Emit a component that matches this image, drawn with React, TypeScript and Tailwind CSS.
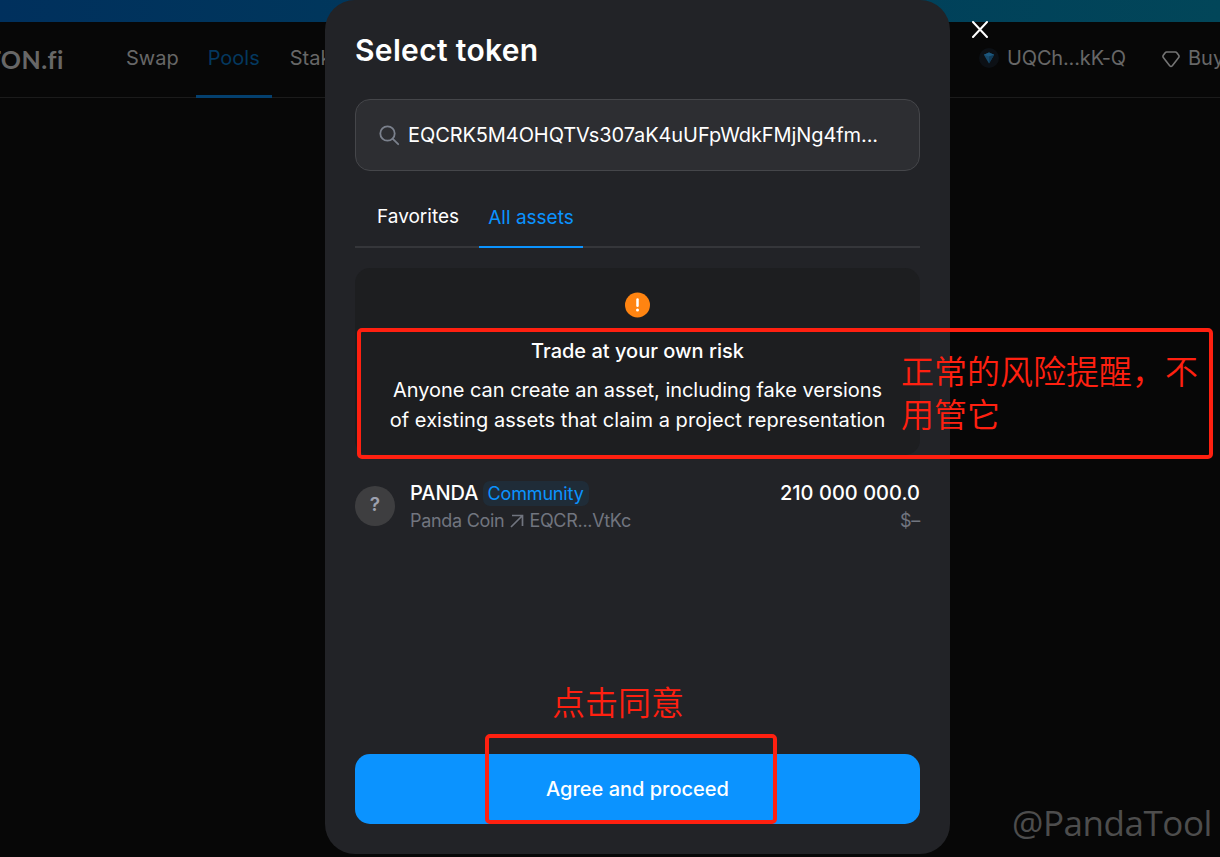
import React from "react";

function SearchIcon() {
  return (
    <svg width="22" height="22" viewBox="0 0 22 22" fill="none" stroke="#7b818d" strokeWidth="1.8" strokeLinecap="round">
      <circle cx="8.5" cy="9.5" r="7.2" />
      <path d="M13.8 14.8L19.2 20.2" />
    </svg>
  );
}

function TokenLogo() {
  return (
    <svg className="mt-px shrink-0" width="20" height="20" viewBox="0 0 20 20">
      <circle cx="10" cy="10" r="10" fill="#0c1015" />
      <path d="M4.800 6.800L10 4.400l5.200 2.400L10 15.600z" fill="#184a6c" />
      <path d="M4.800 6.800L10 4.400l5.200 2.400L10 8.600z" fill="#1d587e" />
      <path d="M10 8.600v7l5.200-8.800z" fill="#123c59" />
    </svg>
  );
}

function GemIcon() {
  return (
    <svg className="mt-[3px] shrink-0" width="18" height="17" viewBox="0 0 18 17" fill="none" stroke="#747474" strokeWidth="1.6" strokeLinejoin="round">
      <path d="M4.600 1h8.800q.9 0 1.400.7L16.700 4.300q.6.900.2 1.800-.2.500-.6.900L10.300 14.800q-1.300 1.300-2.600 0L1.700 7q-.4-.4-.6-.9-.4-.9.2-1.800L3.200 1.700Q3.700 1 4.600 1z" />
    </svg>
  );
}

function NavBar() {
  return (
    <header className="flex h-[76px] w-[1300px] border-b border-[#1b1b1b] text-[20px] leading-[72px] whitespace-nowrap text-[#676767]">
      <div className="-ml-[14px] w-[128px] shrink-0 font-[Lato] text-[25px] leading-[74px] font-bold tracking-[0.45px] [font-variant-ligatures:none]">TON.fi</div>
      <nav className="flex w-[865px] shrink-0">
        <a className="h-[76px] px-[12px]">Swap</a>
        <a className="ml-[5px] h-[76px] w-[76px] border-b-[3px] border-[#04406f] text-center text-[#04385f]">Pools</a>
        <a className="ml-[6px] h-[76px] px-[12px]">Stake</a>
      </nav>
      <div className="flex w-[183px] shrink-0 items-center gap-[8px] pb-[4px]">
        <TokenLogo />
        <span className="tracking-[-0.15px]">UQCh...kK-Q</span>
      </div>
      <div className="flex items-center gap-[8px] pb-[4px]">
        <GemIcon />
        <span>Buy</span>
      </div>
    </header>
  );
}

function SelectTokenModal() {
  return (
    <section className="flex h-[854px] w-[625px] flex-col rounded-[30px] bg-[#222327] px-[30px] pb-[30px] text-white">
      <h1 className="pt-[32px] text-[30px] leading-[36px] font-semibold tracking-[0.33px]">Select token</h1>
      <div className="mt-[31px] flex h-[72px] items-center rounded-[15px] border border-[#45464a] bg-[#2d2e32] pl-[23px] text-[20px]">
        <SearchIcon />
        <span className="ml-[7px] tracking-[-0.09px]">EQCRK5M4OHQTVs307aK4uUFpWdkFMjNg4fm...</span>
      </div>
      <div className="mt-[16px] flex h-[61px] border-b-2 border-[#35363a] text-[19px] leading-[60px]">
        <div className="w-[124px] pl-[22px]">Favorites</div>
        <div className="h-[61px] w-[104px] border-b-2 border-[#0b93ff] text-center leading-[61px] text-[#0b93ff]">All assets</div>
      </div>
      <div className="mt-[20px] flex h-[187px] flex-col items-center rounded-[15px] bg-[#1d1e20] pt-[24px] text-center text-[20px] leading-[30px]">
        <svg width="25" height="26" viewBox="0 0 25 26">
          <circle cx="12.5" cy="13" r="12.5" fill="#ff8411" />
          <path d="M12.5 7.500v6.300" stroke="#fff" strokeWidth="2.5" strokeLinecap="round" />
          <circle cx="12.5" cy="18" r="1.5" fill="#fff" />
        </svg>
        <h2 className="mt-[18px] font-medium">Trade at your own risk</h2>
        <p className="mt-[9px] whitespace-nowrap">
          <span className="tracking-[-0.04px]">Anyone can create an asset, including fake versions</span>
          <br />
          <span className="tracking-[0.05px]">of existing assets that claim a project representation</span>
        </p>
      </div>
      <div className="mt-[24px] flex h-[54px] items-center">
        <div className="mb-px flex size-[40px] items-center justify-center rounded-full bg-[#3e3e40] text-[19px] font-semibold text-[#9ea2b0]">?</div>
        <div className="ml-[15px] flex-1">
          <div className="mt-px flex h-[28px] items-center gap-[5px]">
            <span className="text-[20px] font-medium">PANDA</span>
            <span className="-ml-px flex h-[25px] items-center rounded-[7px] bg-[#1f2c38] px-[5px] text-[18px] tracking-[-0.15px] text-[#0b93ff]">Community</span>
          </div>
          <div className="flex h-[27px] items-center text-[18px] tracking-[-0.3px] text-[#71757f]">
            <span>Panda Coin</span>
            <svg className="mr-[5px] ml-[6px]" width="14" height="14" viewBox="0 0 14 14" fill="none" stroke="currentColor" strokeWidth="1.7">
              <path d="M2 1.5h10.500V12M12.500 1.5L1 13" />
            </svg>
            <span>EQCR...VtKc</span>
          </div>
        </div>
        <div className="text-right">
          <div className="mt-px text-[20px] leading-[28px] font-medium tracking-[0.04px]">210 000 000.0</div>
          <div className="text-[18px] leading-[28px] tracking-[-0.3px] text-[#71757f]">$–</div>
        </div>
      </div>
      <button className="mt-auto h-[70px] rounded-[15px] bg-[#0b93ff] text-[20px] font-medium">Agree and proceed</button>
    </section>
  );
}

export default function App() {
  return (
    <main className="relative h-[857px] w-[1220px] overflow-hidden bg-[#070707] font-[Inter,sans-serif]">
      <div className="h-[22px] bg-linear-to-r from-[#00305d] to-[#024659]" />
      <NavBar />
      <div className="absolute top-0 left-[325px]">
        <SelectTokenModal />
      </div>
      <svg className="absolute top-[20px] left-[971px]" width="18" height="18" viewBox="0 0 18 18" stroke="#fff" strokeWidth="2" strokeLinecap="round">
        <path d="M2 2l14 15M16 2l-14 15" />
      </svg>
      <div className="absolute top-[328px] left-[357px] h-[131px] w-[856px] rounded-[5px] border-4 border-[#ff2010]" />
      <p className="absolute top-[349px] left-[901px] w-[310px] font-['Noto_Sans_CJK_SC',sans-serif] text-[33px] leading-[43px] font-[350] text-[#ff2010]">
        正常的风险提醒，不
        <br />
        用管它
      </p>
      <p className="absolute top-[680px] left-[552px] font-['Noto_Sans_CJK_SC',sans-serif] text-[33px] leading-[43px] font-[350] whitespace-nowrap text-[#ff2010]">点击同意</p>
      <div className="absolute top-[734px] left-[485px] h-[90px] w-[292px] rounded-[5px] border-4 border-[#ff2010]" />
      <p className="absolute top-[799px] left-[1012px] font-['Open_Sans',sans-serif] text-[35px] leading-[48px] tracking-[-0.45px] whitespace-nowrap text-[#4d4d4d]">@PandaTool</p>
    </main>
  );
}
